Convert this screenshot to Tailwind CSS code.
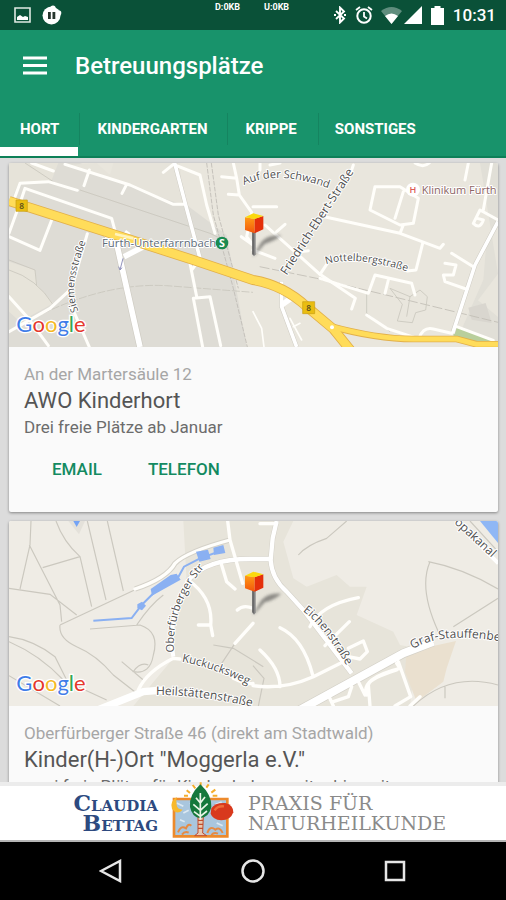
<!DOCTYPE html>
<html lang="de">
<head>
  <meta charset="UTF-8" />
  <meta name="viewport" content="width=device-width, initial-scale=1.0"/>
  <title>Betreuungsplätze</title>
  <script src="https://cdn.jsdelivr.net/npm/@tailwindcss/browser@4"></script>
</head>
<body class="flex h-screen flex-col overflow-hidden bg-[#dcdcdc] font-[Roboto,sans-serif]">

  <!-- Shared map parts -->
  <svg class="absolute h-0 w-0" aria-hidden="true">
    <defs>
      <filter id="soft" x="-20%" y="-40%" width="140%" height="180%"><feGaussianBlur stdDeviation="4"/></filter>
      <linearGradient id="cubeFront" x1="0" y1="0" x2="0" y2="1">
        <stop offset="0" stop-color="#ff9a16"/><stop offset="1" stop-color="#f2560c"/>
      </linearGradient>
      <symbol id="pin" viewBox="0 0 120 150" overflow="visible">
        <path d="M24 130 L50 86 Q70 62 110 66 Q90 84 60 92 L34 122Z" fill="#333" opacity=".5" filter="url(#soft)"/>
        <path d="M23 55h10v68l-5 6-5-6z" fill="#858585"/>
        <path d="M23 55h4v70l-4-4z" fill="#5c5c5c"/>
        <path d="M1 12 L30 16 V60 L1 50Z" fill="url(#cubeFront)"/>
        <path d="M30 16 L56 8 V48 L30 60Z" fill="#e4300b"/>
        <path d="M1 12 L26 0 L56 8 L30 17Z" fill="#fbd90d"/>
      </symbol>
    </defs>
  </svg>

  <!-- Status bar -->
  <div class="relative flex h-[30px] shrink-0 items-center justify-between bg-[#0a5138] pl-[14px] pr-[10px] text-white">
    <div class="flex items-center gap-[11px]">
      <svg class="h-4 w-[17px]" viewBox="0 0 17 16"><path d="M1 1h15v14H1z" fill="none" stroke="#dfe9e2" stroke-width="1.6"/><path d="M3 13V10l3-2 3 2 2-1 3 1v3z" fill="#fff"/></svg>
      <svg class="h-5 w-5" viewBox="0 0 20 20"><circle cx="9.500" cy="10.500" r="9" fill="#fff"/><circle cx="16.500" cy="8" r="2.800" fill="#fff"/><circle cx="11" cy="3" r="2.600" fill="#fff"/><path d="M6 7h2.800v7H6zM10.500 7h2.800v7h-2.800z" fill="#26352d"/></svg>
    </div>
    <div class="absolute left-[215px] top-[2px] flex gap-6 text-[9px] leading-[11px] font-bold">
      <span>D:0KB</span><span>U:0KB</span>
    </div>
    <div class="flex items-center">
      <svg class="h-[18px] w-3" viewBox="0 0 12 18"><path d="M2 5l8 7.500-4 4V1.500l4 4L2 13" fill="none" stroke="#fff" stroke-width="1.900"/><path d="M0 8h2v2H0zM10 8h2v2h-2z" fill="#fff"/></svg>
      <svg class="ml-[9px] h-[18px] w-[18px]" viewBox="0 0 18 18"><circle cx="9" cy="10" r="6.700" fill="none" stroke="#fff" stroke-width="2"/><path d="M1 4l4-3M17 4l-4-3M9 6v4.500l3 2" fill="none" stroke="#fff" stroke-width="1.800"/></svg>
      <svg class="ml-2 h-[17px] w-[21px]" viewBox="0 0 21 17"><path d="M0 4Q10.500-4 21 4L10.500 17z" fill="#fff" opacity=".35"/><path d="M4 9Q10.500 4 17 9L10.500 17z" fill="#fff"/></svg>
      <svg class="ml-[2px] h-[18px] w-[18px]" viewBox="0 0 18 18"><path d="M18 0v18H0z" fill="#fff"/></svg>
      <svg class="ml-[9px] h-[19px] w-[13px]" viewBox="0 0 13 19"><path d="M3.500 0h6v2H13v17H0V2h3.500z" fill="#fff"/></svg>
      <span class="ml-[9px] text-[17px] leading-[30px] font-medium">10:31</span>
    </div>
  </div>

  <!-- App bar -->
  <header class="shrink-0 border-b-2 border-[#0d8058] bg-[#18936b] text-white">
    <div class="flex h-[71px] items-center gap-7 pl-[23px]">
      <button type="button" aria-label="Menü" class="h-6 w-6">
        <svg class="h-6 w-6" viewBox="0 0 24 24"><path d="M0 4h24M0 11.500h24M0 19h24" stroke="#fff" stroke-width="3"/></svg>
      </button>
      <h1 class="text-2xl font-medium">Betreuungsplätze</h1>
    </div>
    <nav class="relative flex h-[55px] text-[15px] font-bold">
      <a href="#hort" aria-current="page" class="border-b-[9px] border-white pr-[19px] pl-5 pt-[18px] leading-5">HORT</a>
      <a href="#kindergarten" class="px-[19px] pt-[18px] leading-5">KINDERGARTEN</a>
      <a href="#krippe" class="px-[19px] pt-[18px] leading-5">KRIPPE</a>
      <a href="#sonstiges" class="px-[19px] pt-[18px] leading-5">SONSTIGES</a>
      <span class="absolute top-3 left-[79px] h-8 w-px bg-black/10"></span>
      <span class="absolute top-3 left-[227px] h-8 w-px bg-black/10"></span>
      <span class="absolute top-3 left-[318px] h-8 w-px bg-black/10"></span>
    </nav>
  </header>

  <!-- Cards -->
  <main class="flex min-h-0 flex-1 flex-col gap-[9px] overflow-hidden pt-[5px] pr-2 pl-[9px]">
    <article class="h-[349px] shrink-0 overflow-hidden rounded-xs bg-[#fafafa] shadow-[0_1px_3px_rgba(0,0,0,0.4)]">
      <svg class="h-[184px] w-full" viewBox="27 24 1467 552" preserveAspectRatio="xMidYMid slice" font-family="'Open Sans', sans-serif">
        <defs>
          <path id="siemens" d="M236 468C205 400 232 330 268 230"/>
          <path id="schwand" d="M732 90C800 60 880 60 990 102"/>
          <path id="ebert" d="M860 362L1075 31"/>
          <path id="nottel" d="M978 328C1040 308 1130 318 1240 356"/>
        </defs>
        <path d="M27 24h1467v552H27z" fill="#e9e6dd"/>
        <path d="M27 24H240L560 150 680 240 740 576H27z" fill="#dedcd5"/>
        <path d="M27 24H175L155 75 55 85 27 150z" fill="#e6e3d9"/>
        <path d="M205 30L550 150 540 24H340L330 60 290 24z" fill="#e6e3da"/>
        <path d="M27 320L105 345 112 390 160 445 60 500 27 470z" fill="#e7e4da"/>
        <path d="M1440 24h54v170l-34 60-10 120-70 160 114 42v-90l-60-50 60-80z" fill="#e1dfd7"/>
        <path d="M1405 458l52-14 18 60-60-10z" fill="#d9d6cf"/>
        <path d="M1365 512l130 50-70-2-65-18z" fill="#b9cf9c"/>
        <g fill="none" stroke="#c9c6bd" stroke-width="2.500">
          <path d="M27 315L105 345 110 392M27 345Q110 370 160 450M75 24L160 80M240 105L630 235 660 250"/>
          <path d="M27 530Q280 380 500 392L759 412" stroke-dasharray="24 5"/>
          <path d="M620 24L640 180 700 400 742 576M634 24L655 180 715 400" stroke="#bebbb4" stroke-dasharray="14 4"/>
          <path d="M779 335L950 370 1200 430 1494 502" stroke="#c0bdb5" stroke-dasharray="30 8"/>
          <path d="M1100 418V475L1170 530M1170 400l60 25 30-20 22 20-5 40-30 8-10 30-45-5 15-50zM1230 425l-10 60"/>
        </g>
        <g fill="none" stroke="#cfccc3" stroke-linejoin="round">
          <path d="M524 24L557 150 600 310M845 380V455L890 576M1494 200L1425 330 1358 535" stroke-width="14"/>
          <path d="M315 235L352 275 420 576" stroke-width="21"/>
        </g>
        <g fill="none" stroke="#fffefa" stroke-width="9" stroke-linecap="round" stroke-linejoin="round">
          <path d="M45 125L60 85 145 80 232 106M65 130L75 100 335 190 347 235M27 235L65 130M27 245L120 286 155 195M95 24L160 48"/>
          <path d="M195 28L390 90 520 148 553 148M268 45L252 92M378 92L366 115M490 52L520 28 600 60 620 150 645 235"/>
          <path d="M262 236L215 400 150 460 27 530M215 455L268 576M27 425L85 490 145 572"/>
          <path d="M570 325L590 425M608 576L580 430 630 425 662 572M595 318L575 345"/>
          <path d="M665 65L710 70 700 24M710 70L718 120 685 118M718 120L755 172 740 245 759 270M724 245l35 25"/>
          <path d="M759 155H830M795 210L960 358 1066 430 1055 462M830 230L855 208M759 285L825 310M900 290L925 287M780 24V45M810 30L840 24"/>
          <path d="M973 185L1200 235 1320 280 1330 268M1125 95L1110 165 1200 210 1240 205 1255 130 1200 95 1125 95M1210 110L1185 190M1210 210L1200 235M1268 265L1248 345 1222 348M960 358L980 328"/>
          <path d="M960 370L1105 415 1125 360 1235 385 1245 420M1165 375L1155 415"/>
          <path d="M1060 30L1050 60M1245 24Q1270 40 1288 24M1405 24L1395 75M1475 24L1450 165M1494 195L1440 165 1420 205Q1440 225 1450 195L1432 190M1355 295L1420 335M1335 325L1368 330 1360 360 1330 360 1335 380 1398 402"/>
          <path d="M1100 480L1160 520 1245 548M1258 548Q1270 515 1300 522L1355 535M1370 515L1480 556"/>
          <path d="M870 490L905 555M880 515L900 505M759 470L785 520 792 576" stroke-width="5"/>
        </g>
        <g fill="none" stroke="#fff" stroke-linejoin="round">
          <path d="M524 24L557 150 600 310M1494 200L1425 330 1358 535M845 380V455L890 576" stroke-width="11"/>
          <path d="M315 235L352 275 420 576M352 275L385 230M372 305L430 275M845 450L880 425" stroke-width="17"/>
        </g>
        <g fill="none" stroke-linejoin="round">
          <path d="M27 138L340 238 580 315 759 375Q850 390 920 455L1000 522 1055 590" stroke="#e2b04a" stroke-width="30"/>
          <path d="M985 512Q1130 552 1240 552H1370L1430 568H1500" stroke="#e2b04a" stroke-width="20"/>
          <path d="M27 138L340 238 580 315 759 375Q850 390 920 455L1000 522 1055 590" stroke="#ffdc5a" stroke-width="25"/>
          <path d="M985 512Q1130 552 1240 552H1370L1430 568H1500" stroke="#ffdc5a" stroke-width="15"/>
          <path d="M345 237L400 250" stroke="#fff3bd" stroke-width="8"/>
        </g>
        <circle cx="996" cy="517" r="6" fill="#fff"/>
        <path d="M48 135h34v34H48zM908 440h36v36h-36z" fill="#e9bd12" stroke="#c99e10" stroke-width="2"/>
        <g font-size="25" font-weight="600" fill="#554c1e" text-anchor="middle"><text x="65" y="161">8</text><text x="926" y="467">8</text></g>
        <path d="M369 310L360 345 366 338M360 345l-4-10" fill="none" stroke="#9293bd" stroke-width="3"/>
        <g font-size="33" fill="#4f4f4f" stroke="#fff" stroke-width="6" paint-order="stroke" stroke-linejoin="round">
          <text font-size="31"><textPath href="#siemens">Siemensstraße</textPath></text>
          <text><textPath href="#schwand">Auf der Schwand</textPath></text>
          <text font-size="36"><textPath href="#ebert">Friedrich-Ebert-Straße</textPath></text>
          <text font-size="31"><textPath href="#nottel">Nottelbergstraße</textPath></text>
          <text x="306" y="275" font-size="34" fill="#5e6c7a">Fürth-Unterfarrnbach</text>
          <text x="1265" y="116" font-size="33" fill="#8c6464">Klinikum Fürth</text>
        </g>
        <circle cx="666" cy="264" r="19" fill="#1a8a51"/>
        <text x="666" y="276" font-size="32" font-weight="700" fill="#fff" text-anchor="middle">S</text>
        <circle cx="1239" cy="104" r="21" fill="#fff"/>
        <text x="1239" y="114" font-size="27" font-weight="600" fill="#dc5a55" text-anchor="middle">H</text>
        <use href="#pin" x="734" y="175" width="120" height="150"/>
        <text x="49" y="530" font-family="Lato, sans-serif" font-size="66" font-weight="400" stroke="#fff" stroke-width="8" paint-order="stroke"><tspan fill="#3f7de8">G</tspan><tspan fill="#e5382c">o</tspan><tspan fill="#f6b824">o</tspan><tspan fill="#3f7de8">g</tspan><tspan fill="#33a653">l</tspan><tspan fill="#e5382c">e</tspan></text>
      </svg>
      <div class="px-[15px] pt-4">
        <p class="text-[17px] leading-[22px] text-[#a6a6a6]">An der Martersäule 12</p>
        <h2 class="text-[22px] leading-8 text-[#555]">AWO Kinderhort</h2>
        <p class="text-[17px] leading-5 text-[#6c6c6c]">Drei freie Plätze ab Januar</p>
        <div class="mt-5 flex gap-[46px] pl-7 text-[17px] leading-6 font-medium text-[#138a61]">
          <button type="button">EMAIL</button>
          <button type="button">TELEFON</button>
        </div>
      </div>
    </article>

    <article class="h-[349px] shrink-0 overflow-hidden rounded-xs bg-[#fafafa] shadow-[0_1px_3px_rgba(0,0,0,0.4)]">
      <svg class="h-[185px] w-full" viewBox="27 18 1467 555" preserveAspectRatio="xMidYMid slice" font-family="'Open Sans', sans-serif">
        <defs>
          <path id="oberf" d="M522 412C515 320 550 220 625 145"/>
          <path id="kuck" d="M545 440Q650 460 760 517"/>
          <path id="heil" d="M468 540Q620 540 790 584"/>
          <path id="eichen" d="M908 288Q980 340 1060 488"/>
          <path id="graf" d="M1238 402Q1340 340 1560 392"/>
          <path id="kanal" d="M1362 24L1510 161"/>
        </defs>
        <path d="M27 18h1467v555H27z" fill="#efece5"/>
        <path d="M550 18H880L850 80 880 190 920 215 1010 180 1050 215 1100 215 1070 300 1180 350 1200 390 1250 400 1230 573H400L520 430 500 320 560 200z" fill="#e7e4da"/>
        <path d="M1220 410L1368 378 1340 460 1330 500 1250 560 1215 470z" fill="#eae0cf"/>
        <path d="M1440 18h54v66z" fill="#8fb7f5"/>
        <path d="M205 18h50l-18 40z" fill="#e4e1da"/>
        <path d="M220 18h20l-10 18z" fill="#74a3f5"/>
        <g fill="none" stroke="#cbc8bf" stroke-width="3.500">
          <path d="M93 18L90 90 60 222M88 90L180 270 185 320M168 18Q190 80 240 125L275 275M128 158L240 125M262 18L318 255M322 18L370 228M27 220L150 238 230 300M180 330L410 222M180 330Q175 370 230 395 290 420 340 480L410 535M27 365Q100 375 165 425L200 495M27 380Q120 420 190 495L320 555M27 482L180 573"/>
          <path d="M270 342L420 330Q480 350 460 420 450 480 400 470 420 440 445 450M365 440L430 495M490 240Q450 270 410 330"/>
          <path d="M895 120Q920 90 980 70L1040 18M1290 140Q1255 220 1315 350M1285 140Q1390 160 1494 222M1494 250L1360 335M1240 573Q1350 470 1494 510M1335 515L1335 550M640 390L700 400 790 455M665 445L705 385M759 452L792 490 775 573"/>
          <path d="M1410 18L1494 110"/>
        </g>
        <g fill="none" stroke="#d4d1c8" stroke-linejoin="round">
          <path d="M405 222Q500 190 525 145 560 110 690 75M565 195Q620 130 759 132H812M830 18L818 70 812 135Q815 190 860 230L910 285 1055 475" stroke-width="16"/>
          <path d="M890 590L1210 415 1300 380" stroke-width="28"/>
        </g>
        <g fill="none" stroke="#fffefb" stroke-width="10" stroke-linecap="round" stroke-linejoin="round">
          <path d="M405 222Q500 190 525 145 560 110 690 75L683 18M690 75L728 205M662 140L680 200 705 222M565 195Q640 250 632 330L638 362M595 330H632M415 525Q440 470 520 430L540 432M705 385L759 325M712 285Q730 268 759 280"/>
          <path d="M780 26H830M930 335Q960 270 1075 248M975 392L1048 320M840 338Q910 370 938 480M780 405Q840 460 840 515M759 512Q850 525 940 485L1030 440M1045 400L1090 378 1102 410 1080 432 1045 425M1070 490L1095 540M1100 540Q1080 490 1200 460L1190 445M1110 573L1105 510Q1110 490 1190 465M1195 440L1232 545 1185 573M985 540L1000 573M1000 560L1045 545 1055 515M1230 573L1260 545M759 505Q740 510 700 490"/>
        </g>
        <g fill="none" stroke="#fff" stroke-linejoin="round">
          <path d="M565 195Q620 130 759 132H812M830 18L818 70 812 135Q815 190 860 230L910 285 1055 475" stroke-width="13"/>
          <path d="M520 425Q500 320 565 195M1495 145L1370 20" stroke-width="12"/>
          <path d="M890 590L1210 415 1300 380" stroke-width="24"/>
          <path d="M280 590L430 530 490 525" stroke-width="22"/>
        </g>
        <g fill="#8ab0f2">
          <path d="M588 110l36-6 8 28-34 8zM640 98l30-8 6 24-34 6zM452 222l60-42 18-4 12 18-50 28-36 20zM412 268l14-8 12 12-12 14-14-6z"/>
          <path d="M280 317L395 309 425 270 470 225M530 195L552 155 600 130 670 105" fill="none" stroke="#8ab0f2" stroke-width="6"/>
        </g>
        <g font-size="34" fill="#4f4f4f" stroke="#fff" stroke-width="6" paint-order="stroke" stroke-linejoin="round">
          <text font-size="33"><textPath href="#oberf">Oberfürberger Str</textPath></text>
          <text><textPath href="#kuck">Kuckucksweg</textPath></text>
          <text font-size="36"><textPath href="#heil">Heilstättenstraße</textPath></text>
          <text font-size="35"><textPath href="#eichen">Eichenstraße</textPath></text>
          <text font-size="36"><textPath href="#graf">Graf-Stauffenberg</textPath></text>
          <text font-size="36"><textPath href="#kanal">opakanal</textPath></text>
        </g>
        <use href="#pin" x="734" y="170" width="120" height="150"/>
        <text x="49" y="528" font-family="Lato, sans-serif" font-size="66" font-weight="400" stroke="#fff" stroke-width="8" paint-order="stroke"><tspan fill="#3f7de8">G</tspan><tspan fill="#e5382c">o</tspan><tspan fill="#f6b824">o</tspan><tspan fill="#3f7de8">g</tspan><tspan fill="#33a653">l</tspan><tspan fill="#e5382c">e</tspan></text>
      </svg>
      <div class="px-[15px] pt-4">
        <p class="text-[17px] leading-[22px] text-[#a6a6a6]">Oberfürberger Straße 46 (direkt am Stadtwald)</p>
        <h2 class="text-[22px] leading-8 text-[#555]">Kinder(H-)Ort "Moggerla e.V."</h2>
        <p class="text-[17px] leading-5 text-[#6c6c6c]">zwei freie Plätze für Kinder, haben weiter hier mit</p>
      </div>
    </article>
  </main>

  <!-- Ad banner -->
  <a href="#praxis" class="flex h-[60px] shrink-0 items-center gap-3 border-t-4 border-b-2 border-t-[#ececec] border-b-[#b5b5b5] bg-white pl-[54px] font-['DejaVu_Serif',serif] leading-5">
    <span class="w-[104px] text-right text-[22px] font-bold text-[#2d4a80] [font-variant-caps:small-caps]">Claudia<br>Bettag</span>
    <svg class="-mt-1 h-14 w-[66px] shrink-0 overflow-visible" viewBox="0 0 198 168">
      <path d="M12 48H172V160H12z" fill="#a9c6de" stroke="#ed8a2c" stroke-width="8"/>
      <path d="M20 60l20 10M40 90l16-8M60 60l14 14M135 65l20-8M140 120l18 8M30 110l14 6" stroke="#dce9f2" stroke-width="5"/>
      <path d="M20 42q-22 14-14 36 16 20 32 2-16 0-18-14-2-14 0-24z" fill="#f8b92c"/>
      <path d="M50 22l10 8M68 6l8 10M92-2v10M116 4l-7 10M136 20l-12 9M42 38h12M128 38h14" stroke="#f5ae2d" stroke-width="6"/>
      <path d="M24 148q8-22 24-12 6-16 16-8M36 155q8-12 20-6M112 150q8-24 24-10 14-10 22 10M124 156q8-10 20-4" fill="none" stroke="#e58b45" stroke-width="6"/>
      <path d="M84 98h16l-2 52 12 8H74l10-8z" fill="#e6c8b2" stroke="#c34b2b" stroke-width="3"/>
      <path d="M84 112h15M84 124h15M84 136h15" stroke="#c34b2b" stroke-width="4"/>
      <path d="M91 4Q56 36 60 72 66 102 90 106 118 102 124 72 126 36 91 4z" fill="#15783c"/>
      <path d="M91 30V110M91 60L78 44M91 60l14-18M91 82L70 64M91 82l22-20M91 100L72 86M91 100l20-16" stroke="#eaf5e8" stroke-width="5" fill="none"/>
      <path d="M124 76Q136 58 166 60 190 66 190 88 182 112 154 112 128 110 122 92z" fill="#d8391d"/>
      <path d="M134 82q8-14 28-12" stroke="#ef6c3a" stroke-width="7" fill="none"/>
    </svg>
    <span class="text-[19px] text-[#8a8a8a]">PRAXIS FÜR<br>NATURHEILKUNDE</span>
  </a>

  <!-- Navigation bar -->
  <nav class="flex h-[58px] shrink-0 items-center justify-center gap-[118px] bg-black">
    <button type="button" aria-label="Zurück"><svg class="h-6 w-6" viewBox="0 0 24 24"><path d="M21 2v20L2 12z" fill="none" stroke="#e6e6e6" stroke-width="2.500"/></svg></button>
    <button type="button" aria-label="Startseite"><svg class="h-6 w-6" viewBox="0 0 24 24"><circle cx="12" cy="12" r="10.500" fill="none" stroke="#e6e6e6" stroke-width="2.500"/></svg></button>
    <button type="button" aria-label="Übersicht"><svg class="h-6 w-6" viewBox="0 0 24 24"><path d="M3 3h18v18H3z" fill="none" stroke="#e6e6e6" stroke-width="2.500"/></svg></button>
  </nav>
</body>
</html>
